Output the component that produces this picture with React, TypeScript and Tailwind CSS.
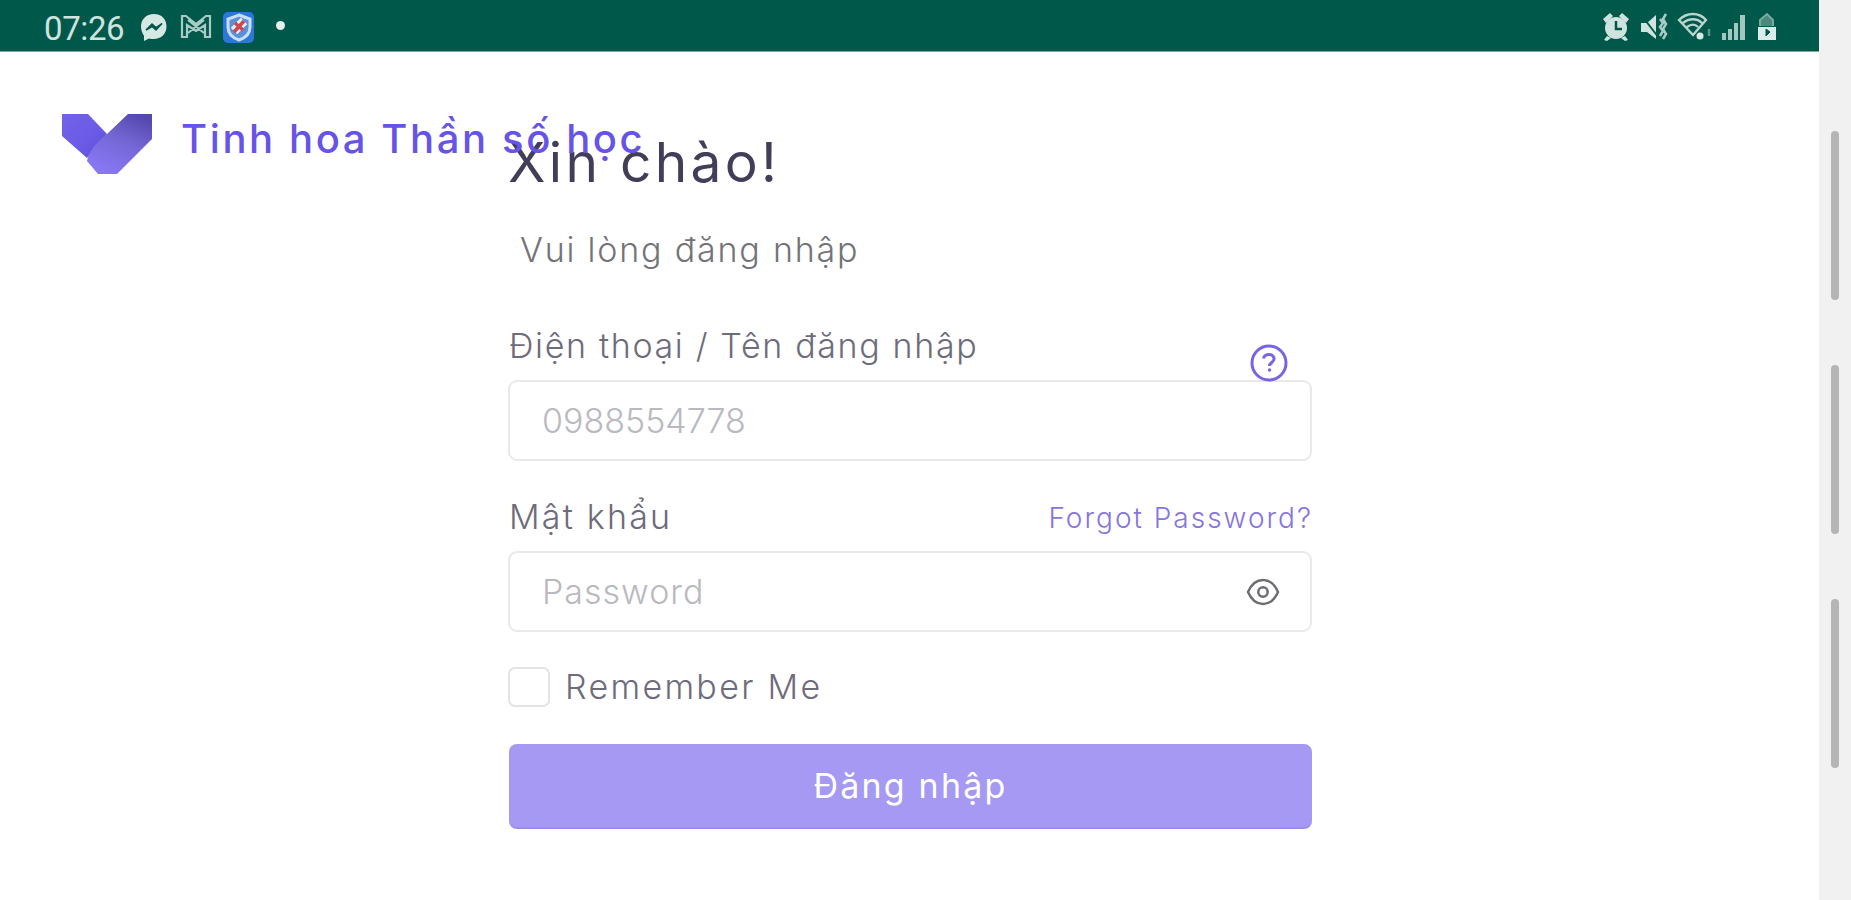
import { useState } from 'react';

const thumbs = [0, 1, 2];

function Logo() {
  return (
    <svg width="92" height="62" viewBox="0 0 92 62" className="shrink-0">
      <defs>
        <linearGradient id="left" x1="0" y1="0" x2="1" y2="1">
          <stop offset="0" stopColor="#7263e6" />
          <stop offset="0.6" stopColor="#6a5ae8" />
          <stop offset="1" stopColor="#5c4fc4" />
        </linearGradient>
        <linearGradient id="right" x1="0.8" y1="0" x2="0.3" y2="1">
          <stop offset="0" stopColor="#5447ad" />
          <stop offset="0.45" stopColor="#7467d4" />
          <stop offset="1" stopColor="#8878f6" />
        </linearGradient>
      </defs>
      <path d="M1 1H27L46 21L26 45L1 23Z" fill="url(#left)" />
      <path d="M67 1H91V26L56 61H37L26 48C28 38 34 31 46 21Z" fill="url(#right)" />
    </svg>
  );
}

function StatusBar() {
  return (
    <header className="flex h-[52px] items-center border-b border-[#7fa9a2] bg-[#00584a] pr-[41px] pl-[44px] text-[#cfe3df]">
      <span className="mt-[5px] font-[Roboto,sans-serif] text-[33px] leading-none tracking-[-0.4px]">07:26</span>
      <svg width="150" height="34" viewBox="0 0 150 34" className="mt-[3px] ml-[14px]">
        <path d="M16 4C8 4 3 9.500 3 16.500c0 4 1.500 7 3 9.300V31l5-2.500c1.500.4 3 .5 4.500.5 8 0 13-5.500 13-12.500S24 4 16 4Z" fill="#d5e8e4" />
        <path d="M8 20l6-6 4 3.500 6-4-6 6.500-4-3.500Z" fill="#00584a" stroke="#00584a" strokeWidth="1.500" />
        <path d="M44 6v21h5V15l9 6 9-6v12h5V6h-4l-10 8-10-8ZM50 23l16-13M66 23L50 10" fill="none" stroke="#a9cbc5" strokeWidth="2.200" />
        <rect x="85" y="2" width="31" height="31" rx="5" fill="#2b78d8" />
        <path d="M101 5l11 4v8c0 7-5 11-11 13-6-2-11-6-11-13V9Z" fill="#5b8fd6" stroke="#c9def5" strokeWidth="3" />
        <path d="M96 21l10-10" stroke="#e4ecf6" strokeWidth="9" />
        <path d="M96 22l10-11M97 13l8 7" stroke="#cc4650" strokeWidth="3.500" />
      </svg>
      <span className="ml-[-12px] size-[9px] rounded-full bg-[#e3f0ee]" />
      <svg width="176" height="32" viewBox="0 0 176 32" className="mt-[3px] ml-auto">
        <g fill="#cfe3df">
          <circle cx="14" cy="17" r="11" />
          <path d="M1 8l7-6 3 3-7 7ZM27 8l-7-6-3 3 7 7ZM5 25l-3 4 3 1 4-3ZM23 25l3 4-3 1-4-3Z" />
          <path d="M39 12h6l9-8v24l-9-7h-6Z" />
        </g>
        <path d="M14 10v8h6" fill="none" stroke="#00584a" strokeWidth="2.500" />
        <path d="M40 5l17 22" stroke="#00584a" strokeWidth="2" />
        <path d="M58 8l3 4-3 4 3 4-3 5M64 3l-3 5 3 5-3 5 3 5-3 5" fill="none" stroke="#a9cbc5" strokeWidth="2.500" />
        <path d="M77 9c8-8 20-8 27 0L91 24ZM81 12c6-5 14-5 19 0M85 16c4-3 8-3 11 0" fill="none" stroke="#bad5d0" strokeWidth="2.300" />
        <circle cx="98" cy="25" r="3.500" fill="#d5e8e4" />
        <path d="M107 18v7" stroke="#5d958b" strokeWidth="2.500" />
        <path d="M120 22h4v7h-4ZM126 18h4v11h-4ZM132 12h4v17h-4ZM138 4h5v25h-5Z" fill="#a3c6bf" />
        <path d="M158 15V9l7-6 6 6v6" fill="#4b887d" stroke="#79a9a1" strokeWidth="2" />
        <path d="M156 16h18v13h-18Z" fill="#dcecea" />
        <path d="M164 18l4 3-4 4Z" fill="#00584a" stroke="#00584a" />
      </svg>
    </header>
  );
}

export default function App() {
  const [remember, setRemember] = useState(false);
  const [showPassword, setShowPassword] = useState(false);

  return (
    <div className="flex h-[900px] w-[1851px] overflow-hidden bg-white font-[Inter,sans-serif]">
      <div className="relative w-[1819px]">
        <StatusBar />

        {/* Brand floats above the form heading */}
        <div className="absolute top-[113px] left-[61px] z-10 flex">
          <Logo />
          <span className="mt-[1px] ml-[28px] text-[40px] leading-[50px] font-medium tracking-[2.600px] whitespace-nowrap text-[#6653e8]">
            Tinh hoa Thần số học
          </span>
        </div>

        <form className="ml-[508px] flex w-[804px] flex-col text-[34px] leading-[40px] text-[#6e6b7b]" onSubmit={(e) => e.preventDefault()}>
          <h1 className="mt-[78px] text-[55px] leading-[64px] font-normal tracking-[3.300px] whitespace-nowrap text-[#433e57]">Xin chào!</h1>
          <p className="mt-[36px] ml-[12px] font-light tracking-[1.800px] whitespace-nowrap text-[#737378]">Vui lòng đăng nhập</p>

          <div className="relative mt-[56px]">
            <label htmlFor="user" className="ml-[1px] block font-light tracking-[1.650px] whitespace-nowrap">Điện thoại / Tên đăng nhập</label>
            <svg width="40" height="40" viewBox="0 0 40 40" className="absolute top-[17px] right-[23px]">
              <circle cx="20" cy="20" r="17" fill="none" stroke="#7766e2" strokeWidth="3" />
              <path d="M14.500 15.500c1-6 11-5 10.500.5 0 3.500-4.500 3.500-4.500 7" fill="none" stroke="#7766e2" strokeWidth="3" />
              <circle cx="20.500" cy="27" r="1.700" fill="#7766e2" />
            </svg>
          </div>
          <input
            id="user"
            placeholder="0988554778"
            className="mt-[14px] h-[81px] rounded-[9px] border-[2.500px] border-[#e9e9eb] px-[32px] font-light outline-none placeholder:text-[#b9b9bf]"
          />

          <div className="mt-[35px] flex items-center justify-between">
            <label htmlFor="password" className="ml-[1px] font-light tracking-[2.200px]">Mật khẩu</label>
            <a href="#" className="mr-[-1px] mt-[2px] text-[28px] font-light tracking-[2px] text-[#8675e0]">Forgot Password?</a>
          </div>
          <div className="mt-[13px] flex h-[81px] items-center rounded-[9px] border-[2.500px] border-[#e9e9eb] pr-[30px] pl-[32px]">
            <input
              id="password"
              type={showPassword ? 'text' : 'password'}
              placeholder="Password"
              className="min-w-0 flex-1 font-light tracking-[1px] outline-none placeholder:text-[#b9b9bf]"
            />
            <button type="button" aria-label="Show password" onClick={() => setShowPassword(!showPassword)}>
              <svg width="34" height="28" viewBox="0 0 34 28" fill="none" stroke="#6e6e72" strokeWidth="2.500">
                <path d="M2 14C9-2 25-2 32 14C25 30 9 30 2 14Z" />
                <circle cx="17" cy="14" r="4.700" />
              </svg>
            </button>
          </div>

          <label className="mt-[35px] flex h-[40px] items-center">
            <input
              type="checkbox"
              checked={remember}
              onChange={(e) => setRemember(e.target.checked)}
              className="h-[40px] w-[42px] appearance-none rounded-[7px] border-[2.500px] border-[#e4e4e7] checked:bg-[#a599f3]"
            />
            <span className="ml-[15px] font-light tracking-[2.300px] whitespace-nowrap">Remember Me</span>
          </label>

          <button className="ml-[1px] mt-[37px] h-[85px] rounded-[8px] border-b-2 border-[#9a8cf0] bg-[#a599f3] font-normal tracking-[2.200px] text-white">
            Đăng nhập
          </button>
        </form>
      </div>

      {/* Scroll rail */}
      <div className="flex flex-1 flex-col items-center gap-[65px] bg-[#f1f1f1] pt-[131px]">
        {thumbs.map((thumb) => (
          <div key={thumb} className="h-[169px] w-[8px] shrink-0 rounded-full bg-[#b5b5b5]" />
        ))}
      </div>
    </div>
  );
}
